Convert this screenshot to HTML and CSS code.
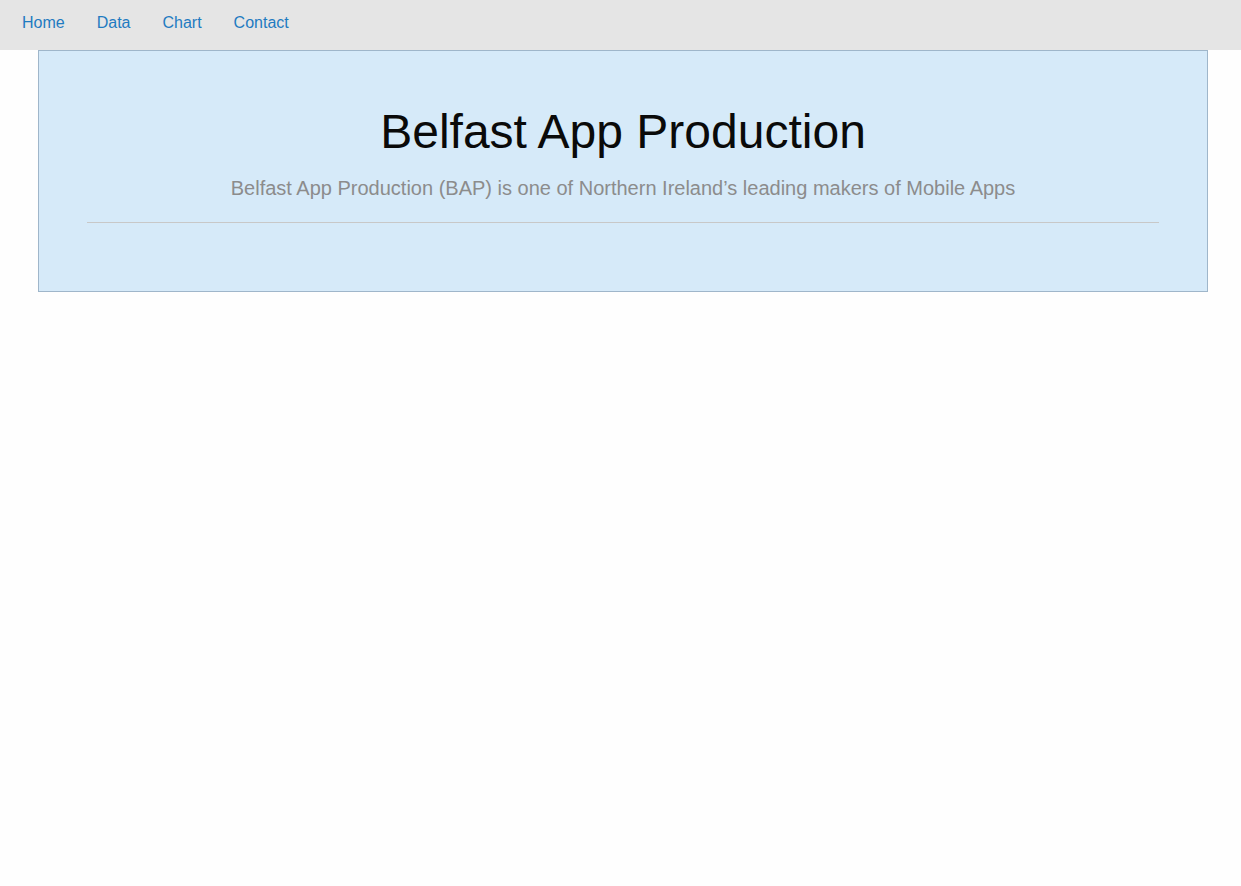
FILE: index.html
```html
<!DOCTYPE html>
<html>
<head>
<meta charset="utf-8">
<link rel="stylesheet" href="styles.css">
</head>
<body>
<nav class="topnav">
  <a href="#">Home</a>
  <a href="#">Data</a>
  <a href="#">Chart</a>
  <a href="#">Contact</a>
</nav>
<main class="page">
  <section class="hero">
    <h1 class="hero-title">Belfast App Production</h1>
    <p class="hero-sub">Belfast App Production (BAP) is one of Northern Ireland’s leading makers of Mobile Apps</p>
    <hr class="hero-rule">
  </section>
</main>
</body>
</html>
```

FILE: styles.css
```css
html, body {
  margin: 0;
  padding: 0;
  background: #fefefe;
  font-family: "Liberation Sans", Arial, sans-serif;
}
.topnav {
  height: 50px;
  background: #e5e5e5;
  display: flex;
  align-items: center;
  gap: 32px;
  padding: 0 0 4px 22px;
  box-sizing: border-box;
}
.topnav a {
  color: #1f7bc1;
  text-decoration: none;
  font-size: 16px;
}
.page {
  padding: 0 33px 0 38px;
}
.hero {
  background: #d6eaf9;
  border: 1px solid #9fb6ca;
  padding: 48px 48px 68px;
  text-align: center;
}
.hero-title {
  margin: 0;
  font-weight: normal;
  font-size: 48px;
  line-height: 66px;
  color: #0a0a0a;
}
.hero-sub {
  margin: 9px 0 0;
  font-size: 20px;
  line-height: 28px;
  color: #8c8c8c;
}
.hero-rule {
  margin: 20px 0 0;
  border: 0;
  border-top: 1px solid #c8c8c8;
  height: 0;
}
```
